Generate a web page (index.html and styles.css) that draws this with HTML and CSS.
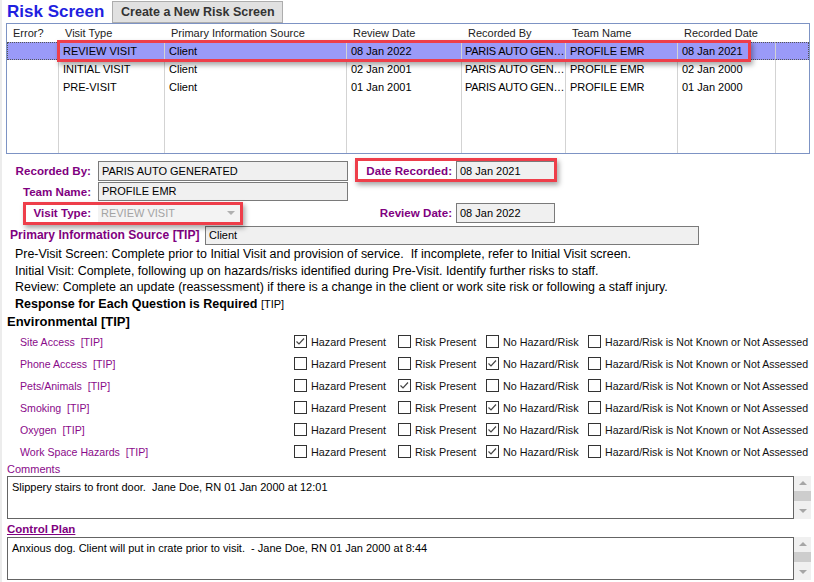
FILE: index.html
```html
<!DOCTYPE html>
<html>
<head>
<meta charset="utf-8">
<title>Risk Screen</title>
<link rel="stylesheet" href="styles.css">
</head>
<body>
<div class="page">
  <header class="top">
    <h1 class="title">Risk Screen</h1>
    <button class="btn">Create a New Risk Screen</button>
  </header>

  <div class="grid-wrap">
    <table class="grid">
      <colgroup>
        <col class="c1"><col class="c2"><col class="c3"><col class="c4"><col class="c5"><col class="c6"><col class="c7"><col class="c8">
      </colgroup>
      <thead>
        <tr><th>Error?</th><th>Visit Type</th><th>Primary Information Source</th><th>Review Date</th><th>Recorded By</th><th>Team Name</th><th>Recorded Date</th><th></th></tr>
      </thead>
      <tbody>
        <tr class="sel"><td></td><td>REVIEW VISIT</td><td>Client</td><td>08 Jan 2022</td><td class="tight">PARIS AUTO GEN…</td><td>PROFILE EMR</td><td>08 Jan 2021</td><td></td></tr>
        <tr><td></td><td>INITIAL VISIT</td><td>Client</td><td>02 Jan 2001</td><td class="tight">PARIS AUTO GEN…</td><td>PROFILE EMR</td><td>02 Jan 2000</td><td></td></tr>
        <tr><td></td><td>PRE-VISIT</td><td>Client</td><td>01 Jan 2001</td><td class="tight">PARIS AUTO GEN…</td><td>PROFILE EMR</td><td>01 Jan 2000</td><td></td></tr>
        <tr class="filler"><td></td><td></td><td></td><td></td><td></td><td></td><td></td><td></td></tr>
      </tbody>
    </table>
  </div>

  <section class="form">
    <div class="lbl">Recorded By:</div>
    <div class="field f-wide">PARIS AUTO GENERATED</div>
    <div class="lbl lbl-r">Date Recorded:</div>
    <div class="field f-date">08 Jan 2021</div>

    <div class="lbl">Team Name:</div>
    <div class="field f-wide f-short">PROFILE EMR</div>
    <div></div>
    <div></div>

    <div class="lbl">Visit Type:</div>
    <div class="combo"><span>REVIEW VISIT</span><span class="arrow"></span></div>
    <div class="lbl lbl-r">Review Date:</div>
    <div class="field f-date">08 Jan 2022</div>
  </section>

  <div class="pis">
    <div class="lbl pis-lbl">Primary Information Source [TIP]</div>
    <div class="field f-pis">Client</div>
  </div>

  <div class="notes">
    <p>Pre-Visit Screen: Complete prior to Initial Visit and provision of service.&nbsp; If incomplete, refer to Initial Visit screen.</p>
    <p>Initial Visit: Complete, following up on hazards/risks identified during Pre-Visit. Identify further risks to staff.</p>
    <p>Review: Complete an update (reassessment) if there is a change in the client or work site risk or following a staff injury.</p>
  </div>
  <div class="required"><b>Response for Each Question is Required</b> <span class="tip">[TIP]</span></div>
  <h2 class="env">Environmental [TIP]</h2>

  <div class="questions">
    <div class="q">
      <span class="qlabel">Site Access&nbsp; [TIP]</span>
      <span class="opt"><span class="cb on"><svg viewBox="0 0 13 13"><path d="M2.5 6.5 L5 9 L10 3.5"/></svg></span>Hazard Present</span>
      <span class="opt"><span class="cb"></span>Risk Present</span>
      <span class="opt"><span class="cb"></span>No Hazard/Risk</span>
      <span class="opt opt-long"><span class="cb"></span>Hazard/Risk is Not Known or Not Assessed</span>
    </div>
    <div class="q">
      <span class="qlabel">Phone Access&nbsp; [TIP]</span>
      <span class="opt"><span class="cb"></span>Hazard Present</span>
      <span class="opt"><span class="cb"></span>Risk Present</span>
      <span class="opt"><span class="cb on"><svg viewBox="0 0 13 13"><path d="M2.5 6.5 L5 9 L10 3.5"/></svg></span>No Hazard/Risk</span>
      <span class="opt opt-long"><span class="cb"></span>Hazard/Risk is Not Known or Not Assessed</span>
    </div>
    <div class="q">
      <span class="qlabel">Pets/Animals&nbsp; [TIP]</span>
      <span class="opt"><span class="cb"></span>Hazard Present</span>
      <span class="opt"><span class="cb on"><svg viewBox="0 0 13 13"><path d="M2.5 6.5 L5 9 L10 3.5"/></svg></span>Risk Present</span>
      <span class="opt"><span class="cb"></span>No Hazard/Risk</span>
      <span class="opt opt-long"><span class="cb"></span>Hazard/Risk is Not Known or Not Assessed</span>
    </div>
    <div class="q">
      <span class="qlabel">Smoking&nbsp; [TIP]</span>
      <span class="opt"><span class="cb"></span>Hazard Present</span>
      <span class="opt"><span class="cb"></span>Risk Present</span>
      <span class="opt"><span class="cb on"><svg viewBox="0 0 13 13"><path d="M2.5 6.5 L5 9 L10 3.5"/></svg></span>No Hazard/Risk</span>
      <span class="opt opt-long"><span class="cb"></span>Hazard/Risk is Not Known or Not Assessed</span>
    </div>
    <div class="q">
      <span class="qlabel">Oxygen&nbsp; [TIP]</span>
      <span class="opt"><span class="cb"></span>Hazard Present</span>
      <span class="opt"><span class="cb"></span>Risk Present</span>
      <span class="opt"><span class="cb on"><svg viewBox="0 0 13 13"><path d="M2.5 6.5 L5 9 L10 3.5"/></svg></span>No Hazard/Risk</span>
      <span class="opt opt-long"><span class="cb"></span>Hazard/Risk is Not Known or Not Assessed</span>
    </div>
    <div class="q">
      <span class="qlabel">Work Space Hazards&nbsp; [TIP]</span>
      <span class="opt"><span class="cb"></span>Hazard Present</span>
      <span class="opt"><span class="cb"></span>Risk Present</span>
      <span class="opt"><span class="cb on"><svg viewBox="0 0 13 13"><path d="M2.5 6.5 L5 9 L10 3.5"/></svg></span>No Hazard/Risk</span>
      <span class="opt opt-long"><span class="cb"></span>Hazard/Risk is Not Known or Not Assessed</span>
    </div>
  </div>

  <div class="comments-label">Comments</div>
  <div class="memo">
    <div class="memo-text">Slippery stairs to front door.&nbsp; Jane Doe, RN 01 Jan 2000 at 12:01</div>
    <div class="scroll">
      <div class="sb-btn"><span class="tri up"></span></div>
      <div class="sb-thumb"></div>
      <div class="sb-track"></div>
      <div class="sb-btn"><span class="tri down"></span></div>
    </div>
  </div>

  <div class="cp-label">Control Plan</div>
  <div class="memo">
    <div class="memo-text">Anxious dog. Client will put in crate prior to visit.&nbsp; - Jane Doe, RN 01 Jan 2000 at 8:44</div>
    <div class="scroll">
      <div class="sb-btn"><span class="tri up"></span></div>
      <div class="sb-thumb"></div>
      <div class="sb-track"></div>
      <div class="sb-btn"><span class="tri down"></span></div>
    </div>
  </div>

  <div class="annot a-row"></div>
  <div class="annot a-date"></div>
  <div class="annot a-visit"></div>
</div>
</body>
</html>
```

FILE: styles.css
```css
html, body {
  margin: 0;
  padding: 0;
  background: #fff;
}

body {
  font-family: "Liberation Sans", Arial, sans-serif;
  font-size: 11px;
  color: #000;
}

.page {
  position: relative;
  width: 814px;
  height: 582px;
  overflow: hidden;
  box-shadow: inset 2px 0 0 #ececec;
}

/* header */
.top {
  display: flex;
  align-items: center;
  height: 23px;
  padding-left: 7px;
  gap: 8px;
}

.title {
  margin: 0;
  font-size: 17px;
  font-weight: bold;
  line-height: 20px;
  color: #1f1fe0;
}

.btn {
  width: 171px;
  height: 22px;
  padding: 0;
  border: 1px solid #adadad;
  background: #e1e1e1;
  color: #333;
  font-family: "Liberation Sans", Arial, sans-serif;
  font-weight: bold;
  font-size: 12.5px;
}

/* grid */
.grid-wrap {
  margin-left: 6px;
  width: 804px;
  height: 131px;
  border: 1px solid #7d93c4;
  box-sizing: border-box;
}

.grid {
  width: 100%;
  height: 100%;
  border-spacing: 0;
  table-layout: fixed;
}

.c1 { width: 52px; }
.c2 { width: 106px; }
.c3 { width: 182px; }
.c4 { width: 115px; }
.c5 { width: 104px; }
.c6 { width: 112px; }
.c7 { width: 98px; }
.c8 { width: 33px; }

.grid th {
  height: 18px;
  padding: 0 0 0 6px;
  text-align: left;
  font-weight: normal;
  color: #222;
  white-space: nowrap;
  overflow: hidden;
}

.grid td {
  height: 18px;
  padding: 0 0 0 4px;
  box-sizing: border-box;
  border-right: 1px solid #d3d3d3;
  white-space: nowrap;
  overflow: hidden;
}

.grid td.tight {
  letter-spacing: -0.25px;
  padding-left: 3px;
}

.grid td:last-child {
  border-right: none;
}

.grid tr.sel td {
  background: #9a9af8;
  border-top: 1px dotted #555;
  border-bottom: 1px dotted #555;
}

.grid tr.sel td:first-child {
  border-left: 1px dotted #555;
}

.grid tr.sel td:last-child {
  border-right: 1px dotted #555;
}

.grid tr.filler td {
  height: auto;
}

/* form */
.form {
  display: grid;
  grid-template-columns: 92px 256px 106px auto;
  grid-template-rows: 21px 21px 23px;
  margin-top: 7px;
  align-items: start;
}

.lbl {
  font-weight: bold;
  font-size: 11.6px;
  color: #800080;
  text-align: right;
  line-height: 20px;
  padding-right: 1px;
  white-space: nowrap;
}

.lbl-r {
  padding-right: 2px;
}

.field {
  height: 20px;
  box-sizing: border-box;
  border: 1px solid #7a7a7a;
  background: #f0f0f0;
  padding-left: 3px;
  line-height: 18px;
  white-space: nowrap;
  overflow: hidden;
}

.f-wide {
  margin-left: 6px;
  width: 250px;
}

.f-short {
  height: 19px;
  line-height: 17px;
}

.f-date {
  margin-left: 2px;
  width: 99px;
}

.combo {
  margin-left: 6px;
  width: 143px;
  height: 20px;
  box-sizing: border-box;
  background: #f3f3f3;
  color: #a3a3a3;
  padding-left: 3px;
  line-height: 20px;
  display: flex;
  justify-content: space-between;
  align-items: center;
}

.arrow {
  width: 0;
  height: 0;
  margin-right: 6px;
  border-left: 4px solid transparent;
  border-right: 4px solid transparent;
  border-top: 4px solid #b0b0b0;
}

.pis {
  display: flex;
  padding-left: 10px;
}

.pis-lbl {
  width: 194px;
  text-align: left;
  line-height: 19px;
  font-size: 12.1px;
}

.f-pis {
  width: 494px;
  height: 19px;
  line-height: 17px;
}

/* notes */
.notes {
  padding-left: 15px;
  margin-top: 1px;
  font-size: 12.45px;
  line-height: 16.5px;
}

.notes p {
  margin: 0;
  white-space: nowrap;
}

.required {
  padding-left: 15px;
  line-height: 17px;
  font-size: 12.5px;
}

.tip {
  font-size: 11px;
}

.env {
  margin: 0;
  padding-left: 7px;
  font-size: 13px;
  font-weight: bold;
  line-height: 18px;
}

/* questions */
.q {
  display: grid;
  grid-template-columns: 274px 104px 88px 102px auto;
  height: 22px;
  align-items: center;
  padding-left: 20px;
}

.qlabel {
  color: #8a0a8a;
  font-size: 10.6px;
  white-space: nowrap;
}

.opt {
  display: flex;
  align-items: center;
  gap: 4px;
  white-space: nowrap;
  color: #111;
  font-size: 10.8px;
}

.opt-long {
  font-size: 10.6px;
}

.cb {
  flex: none;
  width: 13px;
  height: 13px;
  box-sizing: border-box;
  border: 1px solid #333;
  background: #fff;
  position: relative;
}

.cb svg {
  position: absolute;
  left: -1px;
  top: -1px;
  width: 13px;
  height: 13px;
  fill: none;
  stroke: #444;
  stroke-width: 1.2;
}

/* memos */
.comments-label {
  color: #8a0a8a;
  padding-left: 7px;
  line-height: 14px;
  margin-top: -1px;
}

.memo {
  display: flex;
  margin-left: 7px;
  width: 804px;
  height: 43px;
}

.memo-text {
  flex: 1;
  border: 1px solid #646464;
  padding: 2px 4px;
  font-size: 11px;
  line-height: 16px;
  white-space: nowrap;
  overflow: hidden;
}

.scroll {
  width: 17px;
  display: flex;
  flex-direction: column;
  background: #f0f0f0;
}

.sb-btn {
  height: 15px;
  display: flex;
  align-items: center;
  justify-content: center;
}

.sb-thumb {
  height: 10px;
  background: #cdcdcd;
}

.sb-track {
  flex: 1;
}

.tri {
  width: 0;
  height: 0;
  border-left: 4px solid transparent;
  border-right: 4px solid transparent;
}

.tri.up {
  border-bottom: 4px solid #a6a6a6;
}

.tri.down {
  border-top: 4px solid #a6a6a6;
}

.cp-label {
  color: #800080;
  font-weight: bold;
  text-decoration: underline;
  padding-left: 7px;
  line-height: 16px;
  margin-top: 2px;
  font-size: 11.5px;
}

/* red annotation boxes lying over the UI */
.annot {
  position: absolute;
  box-sizing: border-box;
  border: 3px solid #ee3e4a;
  box-shadow: 2px 3px 5px rgba(0, 0, 0, 0.35);
  pointer-events: none;
}

.a-row {
  left: 57px;
  top: 40px;
  width: 694px;
  height: 22px;
}

.a-date {
  left: 355px;
  top: 158px;
  width: 202px;
  height: 24px;
}

.a-visit {
  left: 23px;
  top: 202px;
  width: 220px;
  height: 23px;
}
```
